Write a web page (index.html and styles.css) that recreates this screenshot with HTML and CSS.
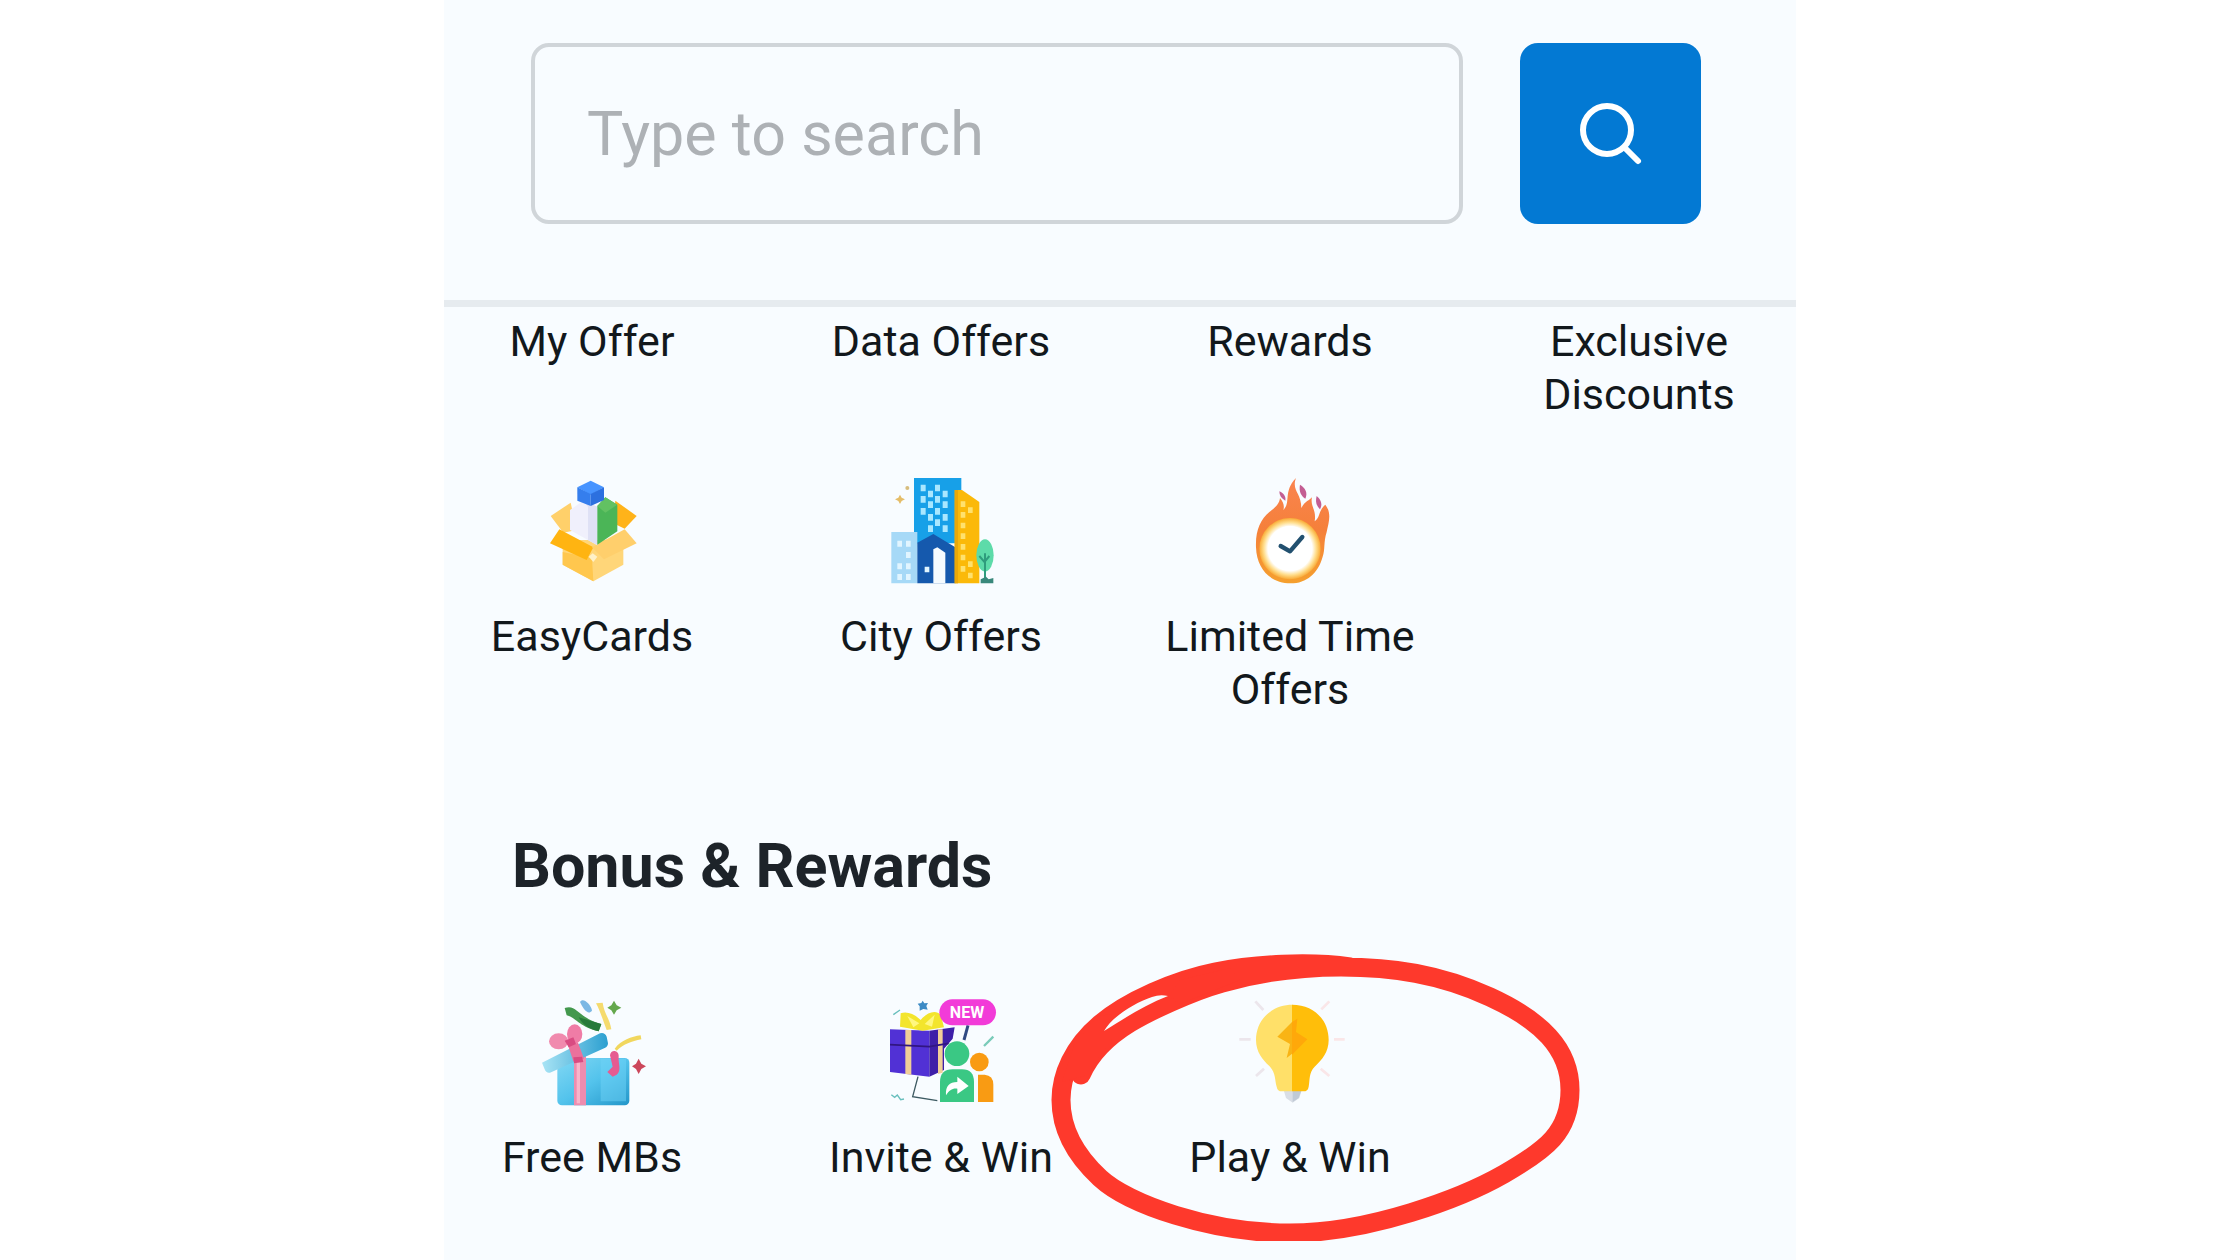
FILE: index.html
```html
<!DOCTYPE html>
<html lang="en">
<head>
    <meta charset="UTF-8">
    <meta name="viewport" content="width=device-width, initial-scale=1.0">
    <title>Offers</title>
    <link rel="stylesheet" href="styles.css">
</head>
<body>
    <main class="app">
        <header>
            <form class="search">
                <input type="search" aria-label="Search" placeholder="Type to search">
                <button type="submit" aria-label="Search">
                    <svg viewBox="0 0 64 64" fill="none" stroke="#fff" stroke-width="6" stroke-linecap="round">
                        <circle cx="28" cy="28" r="24"/>
                        <path d="M46 46L59 59"/>
                    </svg>
                </button>
            </form>
        </header>

        <section class="offers">
            <div class="grid">
                <a class="tile" href="#">My Offer</a>
                <a class="tile" href="#">Data Offers</a>
                <a class="tile" href="#">Rewards</a>
                <a class="tile" href="#">Exclusive Discounts</a>
            </div>
            <div class="grid">
                <a class="tile" href="#">
                    <!-- open box -->
                    <svg class="icon" viewBox="6 54 360 324">
                        <path fill="#ffd06a" d="M62 168L122 128L140 210L100 218Z"/>
                        <path fill="#ffb31a" d="M256 122L320 168L284 206L250 190Z"/>
                        <path fill="#ffd679" d="M98 240L280 240V314L190 364L98 314Z"/>
                        <path fill="#ffc74e" d="M98 276L186 294L190 364L98 314Z"/>
                        <path fill="#ffb411" d="M88 208L190 262L170 300L60 250Z"/>
                        <path fill="#ffcf6c" d="M284 208L320 250L222 298L186 262Z"/>
                        <path fill="#f0f0fc" d="M120 150L160 122L202 140V256L120 210Z"/>
                        <path fill="#dfe1f5" d="M160 122L202 140V256L174 240V140Z"/>
                        <path fill="#4bb557" d="M202 138L226 112L262 134V214L202 254Z"/>
                        <path fill="#62c162" d="M202 138L226 112L262 134L226 158Z"/>
                        <path fill="#4794ff" d="M182 62L222 82L182 104L142 82Z"/>
                        <path fill="#357eed" d="M142 82L182 102V138L142 122Z"/>
                        <path fill="#2c70df" d="M222 82L182 102V138L222 120Z"/>
                        <path fill="#fff1c8" d="M176 290l12-10 14 10-12 16z"/>
                    </svg>
                    EasyCards
                </a>
                <a class="tile" href="#">
                    <!-- city skyline -->
                    <svg class="icon" viewBox="33 54 360 324">
                        <path fill="#17a0e8" d="M132 54H274V250H132Z"/>
                        <path fill="#a6d9f7" d="M64 216H142V370H64Z"/>
                        <path fill="#1559ad" d="M142 248L190 222L256 262V370H142Z"/>
                        <path fill="#f5fbff" d="M190 370V268L202 262L226 278V370Z"/>
                        <path fill="#fbb909" d="M254 90H276L328 126V370H254Z"/>
                        <path fill="#eaa808" d="M254 90H264V370H254Z"/>
                        <g fill="#a9e7ff">
                            <path d="M152 74h15v20h-15zM195 74h15v20h-15zM174 92h15v20h-15zM218 92h15v20h-15zM152 108h15v20h-15zM195 108h15v20h-15zM174 124h15v20h-15zM218 124h15v20h-15zM152 144h15v20h-15zM195 144h15v20h-15zM174 162h15v20h-15zM218 162h15v20h-15zM195 178h15v20h-15zM174 196h15v20h-15zM218 196h15v20h-15z"/>
                        </g>
                        <path fill="#e1f5ff" d="M82 242h14v18H82zM108 242h14v18h-14zM108 276h14v18h-14zM82 310h14v18H82zM108 310h14v18h-14zM82 342h14v18H82zM108 342h14v18h-14zM164 320h14v17h-14z"/>
                        <path fill="#ffe16d" d="M272 124h14v17h-14zM272 156h14v17h-14zM294 142h14v17h-14zM272 188h14v17h-14zM272 220h14v17h-14zM272 252h14v17h-14zM272 284h14v17h-14zM294 304h14v17h-14zM272 318h14v17h-14zM294 338h14v17h-14z"/>
                        <ellipse cx="345" cy="286" rx="26" ry="48" fill="#5ddba9"/>
                        <path fill="none" stroke="#2f9c7d" stroke-width="6" d="M345 280V366M345 308L328 288M345 304L358 288"/>
                        <path fill="#39887b" d="M332 370V358L348 350L356 358L370 354V370Z"/>
                        <path fill="#e5bd68" d="M90 104l5 9 10 5-10 5-5 9-5-9-10-5 10-5z"/>
                        <circle cx="112" cy="84" r="6" fill="#d7bd7e"/>
                    </svg>
                    City Offers
                </a>
                <a class="tile" href="#">
                    <!-- burning clock -->
                    <svg class="icon" viewBox="0 54 360 324">
                        <defs>
                            <linearGradient id="flame" x1="0" y1="0" x2="0" y2="1">
                                <stop offset="0" stop-color="#fa8450"/>
                                <stop offset="0.5" stop-color="#f5803a"/>
                                <stop offset="1" stop-color="#f5a02e"/>
                            </linearGradient>
                            <radialGradient id="ring">
                                <stop offset="0.72" stop-color="#fff"/>
                                <stop offset="0.86" stop-color="#ffdd8b"/>
                                <stop offset="1" stop-color="#f9ab37"/>
                            </radialGradient>
                        </defs>
                        <path fill="url(#flame)" d="M78 262C76 210 92 178 118 156C136 142 148 132 150 114C160 126 164 138 160 150C184 128 158 96 198 54C184 92 214 98 214 144C226 122 238 122 246 112C240 140 260 148 254 184C272 172 264 152 286 134C306 160 296 188 290 216C280 248 286 268 278 290C264 340 230 370 182 370C122 370 80 328 78 262Z"/>
                        <circle cx="180" cy="266" r="92" fill="url(#ring)"/>
                        <circle cx="180" cy="264" r="66" fill="#fff"/>
                        <path fill="none" stroke="#22506f" stroke-width="13" stroke-linejoin="round" stroke-linecap="round" d="M152 258L180 274L217 231"/>
                        <g fill="#c35d92">
                            <path d="M210 74C226 84 234 98 226 116C214 108 206 96 210 74Z"/>
                            <path d="M260 108C274 120 278 134 270 148C258 136 256 124 260 108Z"/>
                            <path d="M148 94C162 100 168 110 166 122C154 116 148 106 148 94Z"/>
                        </g>
                    </svg>
                    Limited Time Offers
                </a>
            </div>
        </section>

        <section class="bonus">
            <h2>Bonus &amp; Rewards</h2>
            <div class="grid">
                <a class="tile" href="#">
                    <!-- gift box with confetti -->
                    <svg class="icon" viewBox="36 57 360 324">
                        <defs>
                            <linearGradient id="box" x1="0" y1="0" x2="1" y2="1">
                                <stop offset="0" stop-color="#82d8f4"/>
                                <stop offset="0.5" stop-color="#53c3ec"/>
                                <stop offset="1" stop-color="#2396c9"/>
                            </linearGradient>
                            <linearGradient id="lid">
                                <stop offset="0" stop-color="#a9e4f5"/>
                                <stop offset="1" stop-color="#2b9fd0"/>
                            </linearGradient>
                        </defs>
                        <rect x="112" y="234" width="216" height="142" rx="14" fill="url(#box)"/>
                        <path fill="#70d4f7" opacity="0.5" d="M242 236H318V364H242Z"/>
                        <path fill="#ee8caf" d="M162 220H198V376H162Z"/>
                        <path fill="#f9b4ca" d="M170 236H180V370H170Z"/>
                        <path fill="url(#lid)" d="M66 248L240 160Q254 156 260 170L264 190Q264 200 254 204L90 278Q78 280 74 268Z"/>
                        <path fill="#eb719c" d="M144 196L174 188L192 236L160 244Z"/>
                        <ellipse cx="116" cy="184" rx="29" ry="24" fill="#f08aae"/>
                        <ellipse cx="164" cy="162" rx="23" ry="29" fill="#ef7ca6"/>
                        <path fill="#d94b82" d="M134 182L160 172L168 192L146 202ZM160 232L186 230L190 246L162 250Z"/>
                        <path fill="#43984d" d="M134 84C172 72 170 112 244 132L236 154C180 142 164 110 140 106Z"/>
                        <path fill="#277a3a" d="M176 112L244 132L236 154C202 146 188 132 176 112Z"/>
                        <path fill="#f5db6e" d="M228 70L248 68C252 100 270 118 274 148L260 150C248 118 240 92 228 70Z"/>
                        <path fill="#f1d75e" d="M284 206C304 180 334 170 362 166L364 178C334 184 312 192 290 212Z"/>
                        <path fill="#7bb8e4" d="M180 66C190 50 214 76 216 92C204 106 192 90 180 66Z"/>
                        <path fill="#64a84d" d="M282 62L290 76L304 83L290 91L282 104L274 91L262 83L274 76Z"/>
                        <path fill="#cc475b" d="M356 236L364 251L378 259L364 267L356 282L348 267L336 259L348 251Z"/>
                        <path fill="#e65b91" d="M270 226C272 206 298 210 296 230C294 250 306 270 290 284L278 290L262 276L278 260Z"/>
                    </svg>
                    Free MBs
                </a>
                <a class="tile" href="#">
                    <!-- gift box and two friends -->
                    <svg class="icon" viewBox="33 57 360 324">
                        <path fill="#5131d5" d="M60 148L178 152V290L60 276Z"/>
                        <path fill="#3e1fa8" d="M178 152L254 142L248 176L222 206V270L178 290Z"/>
                        <path fill="#f1cf98" d="M106 150H124V284L106 282ZM204 148H218V278L204 282Z"/>
                        <path fill="none" stroke="#311681" stroke-width="5" d="M60 194L178 200L236 190"/>
                        <path fill="#f3e52c" d="M92 100C112 92 136 104 152 120C170 98 196 88 212 104L222 142L158 152L90 140Z"/>
                        <path fill="#fff780" d="M112 108L148 130L130 142ZM194 104L164 132L186 140Z"/>
                        <path fill="#3d8bc5" d="M158 62l5 8 11-1-5 9 4 11-13-2-11 5v-13l-6-8 11-2z"/>
                        <path fill="none" stroke="#304a83" stroke-width="9" d="M294 136L282 180"/>
                        <path fill="none" stroke="#79cbb9" stroke-width="7" d="M342 198L370 170"/>
                        <path fill="none" stroke="#3c5961" stroke-width="4" d="M144 290L128 350L202 362"/>
                        <path fill="none" stroke="#68bfbd" stroke-width="4" d="M64 344l10 8 8-7 10 14 10-2M70 104l20-14"/>
                        <rect x="208" y="58" width="170" height="78" rx="39" fill="#f23bd8"/>
                        <text class="badge-text" x="291" y="113" text-anchor="middle">NEW</text>
                        <circle cx="261" cy="221" r="37" fill="#3ac884"/>
                        <path fill="#3ac884" d="M210 366V306Q210 268 248 268H276Q312 268 312 306V366Z"/>
                        <path fill="#fff" d="M228 346C226 318 238 306 262 306V290L296 318L262 342V326C248 324 238 330 228 346Z"/>
                        <circle cx="328" cy="246" r="28" fill="#f99b13"/>
                        <path fill="#f99b13" d="M324 284H344Q370 286 370 314V366H324Z"/>
                    </svg>
                    Invite &amp; Win
                </a>
                <a class="tile" href="#">
                    <!-- light bulb -->
                    <svg class="icon" viewBox="30 57 360 324">
                        <path fill="none" stroke="#ece6ec" stroke-width="8" d="M106 64L130 90M58 178H92M108 288L132 266"/>
                        <path fill="none" stroke="#fae6e8" stroke-width="8" d="M328 64L304 88M342 178H374M302 266L328 288"/>
                        <path fill="#d9dee6" d="M190 326H246L238 354L218 368L198 354Z"/>
                        <path fill="#c0cad6" d="M218 332H244L236 354L218 366Z"/>
                        <path fill="#ffe069" d="M218 74C154 74 108 120 108 180C108 216 128 240 148 258C168 278 164 300 170 320Q172 334 186 334H218Z"/>
                        <path fill="#ffbe0a" d="M216 74C282 74 326 120 326 180C326 216 306 240 284 260C266 278 270 300 266 320Q264 334 250 334H216Z"/>
                        <path fill="#f9b415" d="M216 126L172 170L210 192L200 234L218 220Z"/>
                        <path fill="#ffa80a" d="M216 126L232 116L228 156L262 178L216 224Z"/>
                    </svg>
                    Play &amp; Win
                    <!-- hand drawn marker loop -->
                    <svg class="marker" viewBox="1050 953 532 288">
                        <path fill="none" stroke="#fe392c" stroke-width="19" stroke-linecap="round" d="M1081 1075C1092 1050 1112 1034 1130 1023S1190 992 1222 983S1290 967 1341 967S1440 974 1490 997S1570 1048 1570 1090S1546 1150 1504 1174S1370 1233 1290 1233S1128 1204 1100 1178S1061 1125 1061 1100S1073 1047 1100 1024S1175 980 1215 972S1310 961 1350 967"/>
                        <path fill="#fe392c" d="M1062 1082L1074 1045L1098 1016L1112 1014L1104 1031L1112 1040L1084 1076ZM1169 996L1180 980L1230 968L1240 980L1180 1004Z"/>
                        <path fill="#f8fcff" d="M1104 1031C1112 1017 1134 1003 1152 997Q1160 994 1168 996C1144 1005 1122 1020 1104 1031Z"/>
                    </svg>
                </a>
            </div>
        </section>
    </main>
</body>
</html>
```
FILE: styles.css
```css
* {
    box-sizing: border-box;
}

body {
    font-family: Roboto, 'Noto Sans', sans-serif;
    background: #fff;
    color: #12181c;
    margin: 0;
}

.app {
    max-width: 1352px;
    min-height: 100vh;
    margin: 0 auto;
    background: #f8fcff;
}

header {
    padding: 43px 95px 76px 87px;
    border-bottom: 7px solid #e6ebef;
}

.search {
    display: flex;
    gap: 57px;
}

.search input {
    flex: 1;
    min-width: 0;
    height: 181px;
    padding: 0 52px;
    font-family: inherit;
    font-size: 61px;
    color: #12181c;
    background: transparent;
    border: 4px solid #d0d5d9;
    border-radius: 18px;
}

.search input::placeholder {
    color: #adb1b5;
    opacity: 1;
}

.search button {
    display: flex;
    align-items: center;
    justify-content: center;
    width: 181px;
    height: 181px;
    padding: 0;
    background: #0379d3;
    border: none;
    border-radius: 18px;
    cursor: pointer;
}

.search button svg {
    width: 64px;
    height: 64px;
}

.offers {
    display: grid;
    gap: 57px;
    padding-top: 8px;
}

.grid {
    display: grid;
    grid-template-columns: repeat(4, 1fr);
    column-gap: 79px;
    padding: 0 22px 0 13px;
}

.tile {
    position: relative;
    font-size: 43px;
    line-height: 53px;
    text-align: center;
    color: inherit;
    text-decoration: none;
}

.icon {
    display: block;
    width: 120px;
    height: 108px;
    margin: 0 auto 24px;
}

.badge-text {
    font-size: 48px;
    font-weight: bold;
    fill: #fff;
}

.bonus {
    padding-top: 115px;
}

.bonus h2 {
    margin: 0 0 98px;
    padding: 0 68px;
    font-size: 61px;
    line-height: 70px;
    color: #1d2329;
}

.marker {
    position: absolute;
    top: -46px;
    left: -105px;
    width: 532px;
    height: 288px;
    pointer-events: none;
}
```
